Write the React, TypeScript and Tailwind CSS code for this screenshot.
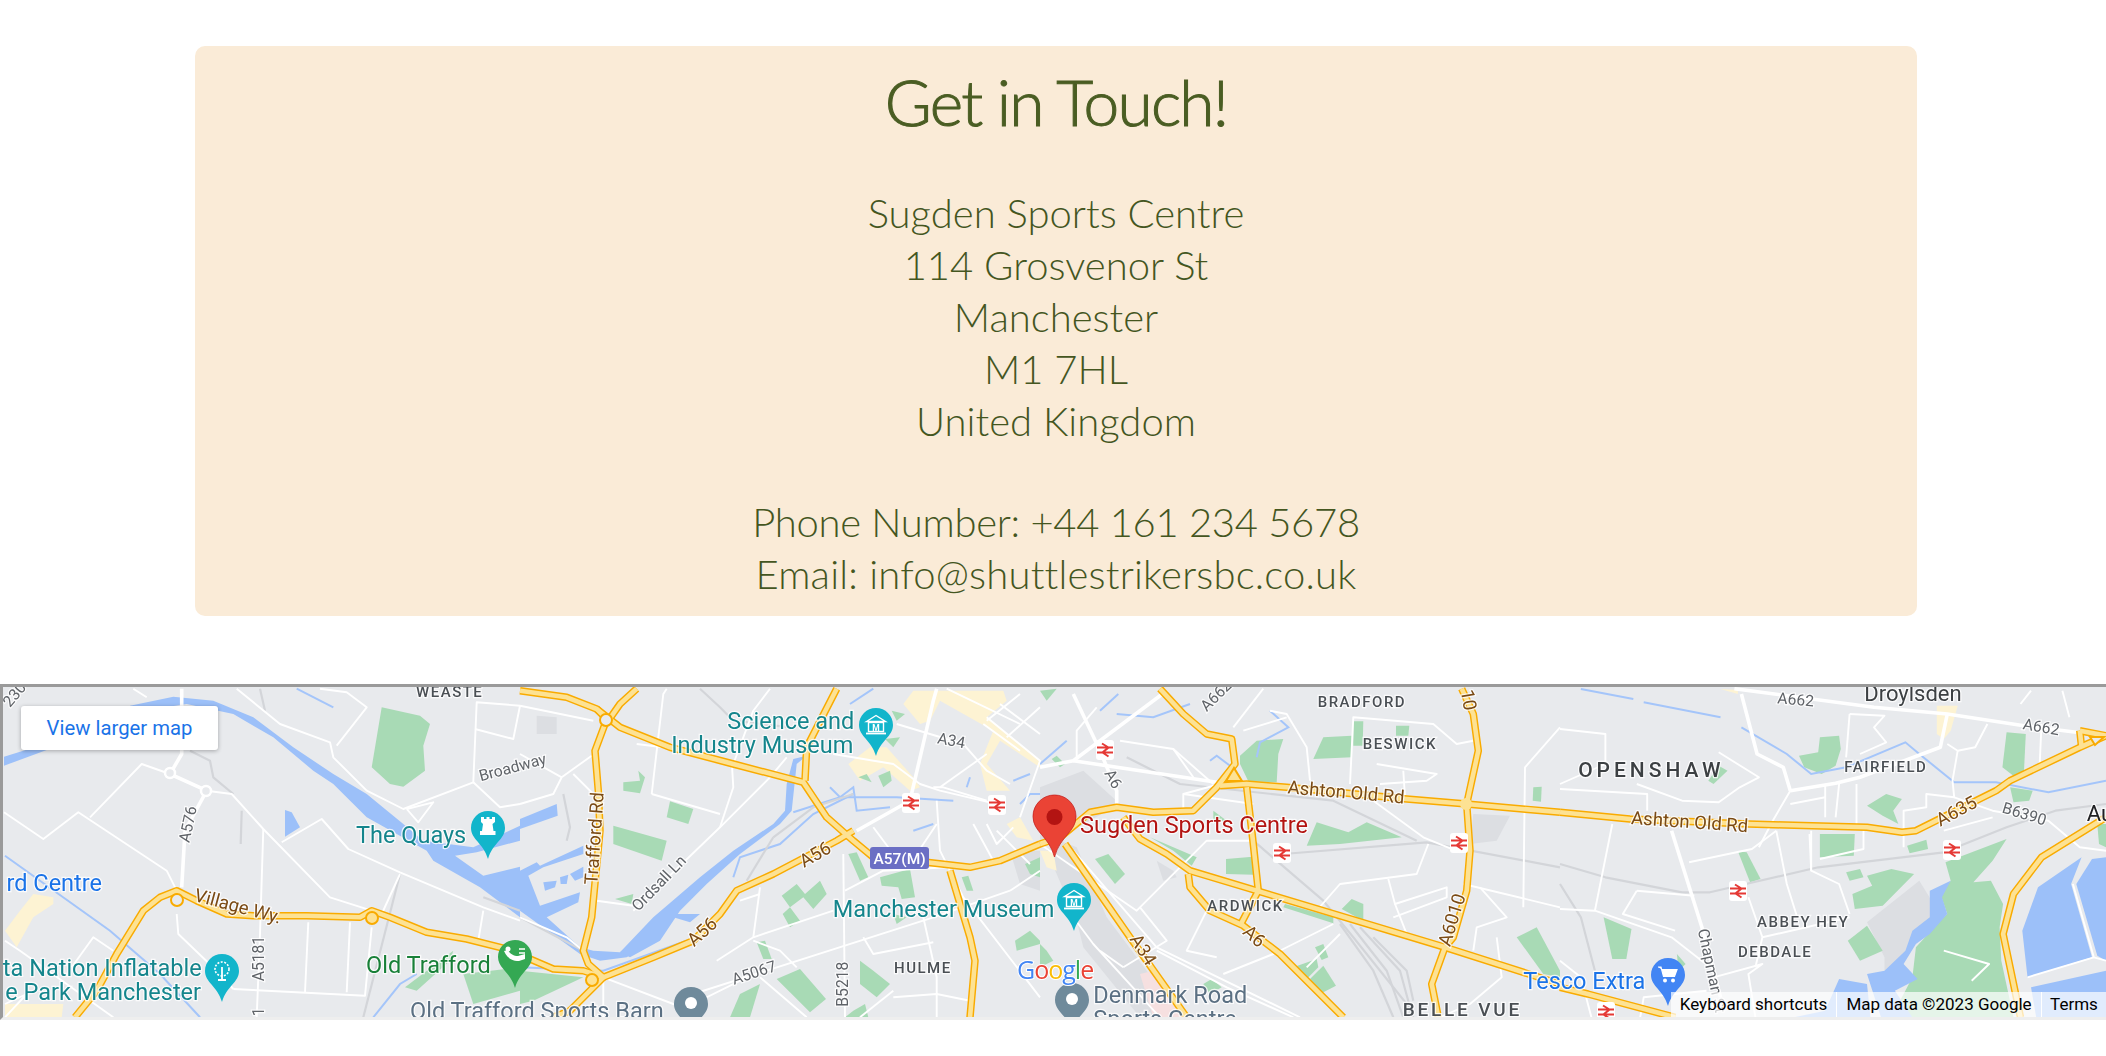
import type { ReactNode } from "react";

// coords are read off 4 crops of the map (3x), one list per slice
type Shape = [number, number[]];

const OFFSET = [0, 520, 1040, 1560];
const SCALE = [1 / 3, 1 / 3, 1 / 3, 546 / 1565];
const A = 0;
const B = 1;
const C = 2;
const D = 3;

const toX = (p: number, x: number) => OFFSET[p] + x * SCALE[p];
const toY = (y: number) => 684 + y / 3;

function line(p: number, pts: number[]) {
  let d = "";
  for (let i = 0; i < pts.length; i += 2) {
    d += (i === 0 ? "M" : "L") + toX(p, pts[i]).toFixed(1) + " " + toY(pts[i + 1]).toFixed(1);
  }
  return d;
}

const greys: Shape[] = [
  [B, [50, 95, 110, 100, 110, 150, 50, 150]],
  [B, [1470, 500, 1560, 500, 1560, 620, 1500, 600]],
  [C, [0, 310, 130, 260, 240, 360, 40, 470, 0, 480]],
  [C, [20, 500, 60, 470, 110, 490, 200, 700, 350, 900, 430, 1000, 300, 1000, 130, 790, 110, 710]],
  [C, [1300, 390, 1410, 395, 1370, 470, 1290, 480]],
  [C, [350, 530, 400, 560, 410, 580, 370, 590]],
  [D, [880, 715, 1030, 590, 1065, 650, 1100, 690, 1070, 740, 1010, 770, 980, 840, 930, 860, 930, 820]],
];

const urban: Shape[] = [
  [A, [100, 630, 160, 640, 160, 660, 100, 700, 50, 790, 15, 740, 60, 680]],
  [A, [15, 960, 190, 960, 185, 1000, 15, 1000]],
  [B, [985, 240, 1050, 190, 1100, 190, 1180, 280, 1200, 310, 1170, 320, 1090, 250, 1020, 290]],
  [B, [1150, 60, 1180, 20, 1450, 20, 1460, 50, 1400, 100, 1560, 230, 1560, 250, 1440, 170, 1400, 240, 1470, 320, 1400, 320, 1380, 240, 1420, 140, 1260, 50, 1230, 110, 1200, 120]],
  [B, [1460, 420, 1500, 400, 1540, 470, 1490, 460]],
  [C, [0, 500, 40, 500, 50, 560, 20, 550]],
  [D, [1080, 65, 1140, 65, 1120, 140, 1100, 165, 1080, 150]],
  [D, [460, 15, 510, 18, 510, 30]],
];

const parks: Shape[] = [
  [A, [1145, 70, 1260, 95, 1290, 120, 1270, 185, 1275, 260, 1210, 308, 1170, 300, 1115, 250]],
  [A, [1390, 870, 1560, 850, 1560, 920, 1420, 960]],
  [A, [1215, 910, 1360, 800, 1350, 830, 1250, 920]],
  [B, [310, 295, 360, 290, 355, 260, 375, 280, 360, 328, 310, 320]],
  [B, [450, 352, 520, 375, 505, 420, 440, 400]],
  [B, [280, 425, 440, 470, 425, 530, 280, 480]],
  [B, [285, 645, 340, 630, 335, 660]],
  [B, [0, 860, 190, 880, 40, 950, 0, 960]],
  [B, [985, 510, 1010, 505, 1045, 580, 1020, 590]],
  [B, [1080, 580, 1170, 555, 1185, 640, 1145, 645, 1135, 610, 1085, 605]],
  [B, [785, 635, 830, 600, 855, 630, 900, 590, 920, 630, 880, 675, 850, 640, 810, 670, 840, 710, 810, 730, 788, 690, 810, 670]],
  [B, [710, 775, 735, 770, 755, 825, 730, 825]],
  [B, [770, 885, 840, 855, 918, 945, 870, 985]],
  [B, [1020, 830, 1060, 860, 1110, 900, 1070, 940, 1020, 900]],
  [B, [630, 1000, 660, 930, 720, 900, 690, 1000]],
  [B, [1000, 980, 1035, 960, 1045, 1000, 975, 1000]],
  [B, [1325, 580, 1345, 575, 1360, 620, 1340, 620]],
  [B, [1485, 770, 1530, 740, 1560, 770, 1560, 780, 1490, 800]],
  [B, [1120, 690, 1160, 700, 1130, 720]],
  [B, [1115, 80, 1155, 90, 1130, 110]],
  [B, [1095, 165, 1140, 160, 1120, 190]],
  [B, [1015, 280, 1040, 270, 1055, 295]],
  [B, [1075, 275, 1110, 260, 1115, 290, 1090, 310]],
  [B, [1515, 540, 1560, 520, 1560, 580, 1530, 570]],
  [C, [600, 215, 650, 170, 730, 165, 715, 210, 710, 295, 625, 292, 600, 240]],
  [C, [850, 160, 935, 155, 935, 220, 820, 225]],
  [C, [940, 112, 970, 112, 968, 185, 940, 185]],
  [C, [1068, 125, 1108, 125, 1105, 155, 1068, 155]],
  [C, [1480, 310, 1505, 308, 1503, 353, 1478, 350]],
  [C, [830, 415, 925, 445, 980, 415, 1085, 460, 900, 480, 800, 485]],
  [C, [558, 525, 638, 518, 640, 572, 558, 570]],
  [C, [165, 525, 205, 510, 255, 570, 225, 600]],
  [C, [330, 460, 400, 490, 470, 520, 455, 545, 400, 500]],
  [C, [520, 380, 560, 410, 520, 410]],
  [C, [735, 660, 880, 700, 880, 718, 730, 670]],
  [C, [905, 675, 935, 645, 970, 660, 970, 710]],
  [C, [825, 790, 850, 780, 865, 820, 845, 828]],
  [C, [760, 850, 830, 825, 835, 850, 800, 885]],
  [C, [810, 885, 850, 845, 888, 905, 840, 930]],
  [C, [1430, 760, 1490, 730, 1560, 860, 1560, 880, 1510, 870]],
  [C, [490, 900, 515, 885, 545, 910, 510, 930]],
  [C, [0, 20, 50, 14, 20, 50]],
  [C, [35, 225, 50, 215, 75, 240, 60, 250]],
  [C, [0, 780, 20, 800, 40, 830, 0, 850]],
  [D, [685, 215, 740, 205, 745, 160, 800, 155, 805, 195, 790, 245, 750, 270, 700, 250]],
  [D, [425, 290, 455, 245, 480, 260, 440, 300]],
  [D, [1280, 145, 1335, 150, 1330, 260, 1305, 280, 1268, 250]],
  [D, [1290, 310, 1355, 320, 1345, 350, 1300, 355]],
  [D, [880, 365, 935, 330, 980, 345, 955, 380, 970, 420, 925, 395]],
  [D, [745, 450, 845, 450, 842, 515, 745, 520]],
  [D, [995, 485, 1050, 467, 1055, 495, 1002, 508]],
  [D, [510, 502, 535, 505, 575, 585, 545, 595]],
  [D, [820, 565, 860, 555, 870, 580, 830, 590]],
  [D, [880, 575, 950, 555, 1015, 570, 925, 665, 845, 675, 838, 630, 895, 605]],
  [D, [1105, 535, 1280, 465, 1240, 530, 1185, 595, 1235, 590, 1270, 660, 1260, 730, 1265, 830, 1300, 1000, 950, 1000, 1010, 880, 1020, 790, 1090, 710, 1110, 690, 1090, 630, 1120, 590]],
  [D, [825, 770, 880, 725, 925, 800, 860, 830]],
  [D, [125, 700, 205, 735, 190, 825, 150, 825]],
  [D, [1540, 420, 1565, 420, 1565, 490, 1545, 480]],
  [D, [335, 810, 360, 840, 340, 860]],
];

const water: Shape[] = [
  [A, [12, 218, 135, 180, 140, 198, 12, 245]],
  [A, [390, 65, 520, 38, 640, 50, 760, 100, 880, 190, 1000, 270, 1100, 330, 1210, 420, 1270, 470, 1420, 490, 1560, 425, 1560, 470, 1430, 505, 1365, 515, 1450, 575, 1560, 548, 1560, 700, 1440, 610, 1300, 530, 1280, 500, 1100, 400, 1000, 300, 940, 260, 820, 160, 700, 90, 560, 60, 400, 85]],
  [A, [855, 378, 875, 385, 900, 430, 855, 458]],
  [B, [0, 405, 110, 360, 113, 395, 0, 435]],
  [B, [0, 560, 50, 535, 60, 545, 190, 485, 190, 510, 70, 550, 25, 575, 60, 665, 180, 625, 175, 655, 80, 700, 180, 790, 220, 800, 300, 805, 400, 720, 460, 690, 540, 690, 510, 715, 460, 700, 420, 760, 320, 820, 240, 830, 180, 810, 0, 680]],
  [B, [300, 805, 400, 700, 470, 640, 540, 580, 640, 500, 760, 420, 795, 380, 800, 300, 820, 225, 860, 215, 830, 240, 815, 380, 780, 420, 660, 510, 560, 600, 480, 680, 420, 770, 330, 820]],
  [B, [70, 595, 110, 590, 105, 610, 75, 620]],
  [B, [120, 580, 145, 572, 140, 600, 122, 600]],
  [B, [150, 570, 190, 548, 190, 580, 165, 590]],
  [D, [1060, 620, 1120, 590, 1095, 640, 1110, 690, 1060, 750, 1020, 780, 985, 840, 1025, 885, 960, 920, 1010, 1000, 920, 1000, 880, 870, 930, 860, 990, 800, 1010, 740, 1060, 700]],
  [D, [1495, 520, 1465, 600, 1525, 820, 1340, 880, 1325, 740, 1370, 610]],
  [D, [1565, 520, 1525, 525, 1480, 600, 1540, 815, 1565, 830]],
  [D, [1565, 860, 1350, 910, 1365, 1000, 1565, 1000]],
  [D, [800, 885, 880, 900, 890, 1000, 670, 1000, 760, 980]],
];

const thinWater: Shape[] = [
  [A, [15, 515, 330, 740, 480, 870, 600, 1000]],
  [A, [890, 14, 1000, 70]],
  [A, [1120, 1000, 1200, 900, 1250, 870]],
  [B, [640, 580, 660, 520, 780, 480, 880, 390, 1000, 330]],
  [B, [820, 385, 960, 340, 1130, 340, 1300, 350]],
  [B, [930, 310, 960, 340, 1000, 310, 1010, 380, 1110, 370]],
  [B, [1180, 440, 1240, 420]],
  [B, [1340, 310, 1350, 280]],
  [B, [1480, 290, 1530, 270]],
  [B, [1500, 360, 1530, 330, 1560, 330]],
  [B, [0, 850, 250, 860, 500, 770]],
  [B, [990, 60, 1060, 14]],
  [C, [0, 240, 80, 170]],
  [C, [180, 80, 235, 30]],
  [C, [230, 90, 340, 100, 450, 60]],
  [C, [650, 220, 660, 175, 745, 130, 690, 80]],
  [C, [510, 230, 530, 215, 570, 245]],
  [D, [60, 15, 210, 45]],
  [D, [240, 55, 460, 100]],
  [D, [520, 130, 650, 210, 720, 270, 820, 250, 990, 175, 1030, 210, 1130, 295, 1250, 295, 1400, 325, 1565, 290]],
];

const rails: Shape[] = [
  [A, [780, 14, 795, 80]],
  [A, [570, 200, 630, 230, 640, 280, 700, 330]],
  [A, [725, 380, 722, 480]],
  [A, [1090, 1000, 1200, 570]],
  [A, [1450, 640, 1560, 680]],
  [B, [540, 14, 600, 70, 640, 110, 810, 130]],
  [B, [130, 330, 150, 430, 140, 470]],
  [B, [760, 460, 680, 590]],
  [B, [0, 700, 190, 800]],
  [B, [1000, 330, 880, 370, 760, 460]],
  [C, [260, 220, 420, 300, 880, 350, 1130, 470]],
  [C, [640, 470, 850, 650, 940, 760, 1100, 960, 1120, 1000]],
  [C, [730, 510, 1160, 475, 1560, 550]],
  [C, [900, 720, 1000, 860, 1060, 1000]],
  [C, [930, 720, 1040, 860, 1090, 1000]],
  [C, [960, 730, 1080, 860, 1110, 970]],
  [C, [1000, 760, 1100, 860, 1120, 950]],
  [D, [0, 540, 130, 580, 350, 625, 430, 625, 740, 550, 1100, 505, 1280, 430, 1420, 380, 1565, 360]],
  [D, [0, 600, 60, 700, 100, 860]],
];

const bigRoads: Shape[] = [
  [A, [545, 14, 545, 210, 510, 270, 620, 320, 555, 440, 545, 610]],
  [B, [1010, 440, 1170, 350, 1240, 50, 1250, 14]],
  [C, [0, 250, 100, 230, 380, 20]],
  [C, [100, 230, 530, 295]],
  [C, [100, 30, 180, 200, 230, 320, 230, 360]],
  [D, [500, 14, 900, 70, 1110, 90, 1330, 125, 1480, 145]],
  [D, [520, 30, 565, 210, 640, 250, 660, 320]],
  [D, [660, 320, 790, 298, 860, 280, 1090, 190, 1110, 90]],
  [D, [320, 440, 410, 740, 460, 940]],
];

const roads: Shape[] = [
  [A, [12, 385, 130, 465, 235, 385, 500, 560, 530, 620]],
  [A, [270, 400, 425, 240, 510, 270]],
  [A, [620, 320, 695, 330, 790, 435, 990, 640, 1115, 680]],
  [A, [710, 14, 840, 120, 990, 175, 1000, 220, 1100, 320, 1210, 375, 1420, 295, 1430, 55, 1560, 65]],
  [A, [1010, 185, 1100, 70, 1040, 25, 960, 14]],
  [A, [1220, 375, 1300, 355, 1255, 415, 1220, 375]],
  [A, [845, 475, 965, 405, 1045, 495, 1200, 565, 1450, 670, 1560, 710]],
  [A, [790, 435, 780, 750, 770, 1000]],
  [A, [925, 715, 915, 925]],
  [A, [1050, 715, 1040, 925]],
  [A, [700, 915, 1095, 935, 1115, 730]],
  [A, [530, 690, 535, 750, 660, 870, 700, 915]],
  [A, [1425, 135, 1540, 165, 1560, 65]],
  [A, [1420, 295, 1500, 370, 1560, 360]],
  [A, [1200, 570, 1145, 690]],
  [A, [1450, 680, 1435, 770]],
  [A, [15, 770, 60, 800, 340, 1000]],
  [A, [215, 850, 280, 760, 340, 800]],
  [A, [15, 960, 80, 930, 15, 1000]],
  [A, [400, 14, 440, 40]],
  [B, [0, 65, 220, 110]],
  [B, [215, 215, 125, 280, 100, 330, 0, 360]],
  [B, [125, 280, 0, 210]],
  [B, [160, 270, 240, 350]],
  [B, [395, 330, 430, 30, 440, 14]],
  [B, [350, 180, 430, 190]],
  [B, [230, 650, 340, 665]],
  [B, [395, 330, 600, 390]],
  [B, [340, 680, 600, 430, 640, 310, 635, 230]],
  [B, [600, 430, 750, 280, 800, 220]],
  [B, [750, 14, 700, 80, 640, 240]],
  [B, [590, 830, 700, 760, 720, 610]],
  [B, [660, 650, 720, 630]],
  [B, [0, 700, 140, 760, 190, 800]],
  [B, [250, 880, 460, 960, 520, 980]],
  [B, [250, 880, 250, 1000]],
  [B, [520, 930, 1240, 700, 1470, 620]],
  [B, [970, 510, 975, 1000]],
  [B, [720, 880, 860, 1000]],
  [B, [700, 770, 780, 800, 830, 850]],
  [B, [520, 960, 680, 880]],
  [B, [975, 620, 1090, 560, 1280, 550]],
  [B, [700, 760, 940, 680]],
  [B, [1060, 430, 1120, 510]],
  [B, [1190, 510, 1250, 420]],
  [B, [1210, 700, 1250, 880, 1250, 1000]],
  [B, [1030, 760, 1060, 810, 1240, 775]],
  [B, [1240, 310, 1270, 310, 1400, 350]],
  [B, [1250, 350, 1260, 500, 1330, 640, 1560, 940]],
  [B, [1130, 120, 1330, 180, 1400, 260, 1470, 300]],
  [B, [1260, 310, 1400, 210]],
  [B, [1400, 420, 1430, 480, 1480, 430]],
  [B, [1360, 420, 1420, 530]],
  [B, [1470, 620, 1560, 560]],
  [B, [940, 210, 1120, 240, 1200, 300, 1260, 320, 1450, 365]],
  [B, [1400, 100, 1560, 230, 1500, 400]],
  [B, [1280, 14, 1500, 120]],
  [B, [1440, 60, 1560, 150]],
  [B, [1500, 30, 1400, 110]],
  [B, [1560, 70, 1460, 160]],
  [B, [1120, 940, 1250, 930, 1350, 950]],
  [B, [1020, 1000, 1120, 920]],
  [B, [1390, 120, 1500, 200]],
  [B, [1430, 440, 1530, 540]],
  [C, [110, 220, 110, 140, 170, 70]],
  [C, [540, 300, 430, 330, 430, 385]],
  [C, [580, 130, 670, 14]],
  [C, [240, 170, 400, 195, 520, 300]],
  [C, [400, 195, 460, 280]],
  [C, [640, 360, 430, 330]],
  [C, [810, 290, 800, 190, 740, 90, 690, 80]],
  [C, [740, 100, 610, 140]],
  [C, [930, 300, 940, 100, 1180, 120, 1250, 180, 1300, 170]],
  [C, [1010, 240, 1190, 270, 1160, 290, 1020, 300]],
  [C, [1095, 340, 1090, 260]],
  [C, [1000, 350, 1150, 460, 1260, 505]],
  [C, [1165, 480, 1130, 570, 900, 600, 830, 680]],
  [C, [1045, 585, 1065, 660, 1220, 610, 1220, 640, 1060, 700]],
  [C, [1065, 660, 1100, 750]],
  [C, [1270, 600, 1560, 670]],
  [C, [1320, 610, 1400, 700, 1310, 730, 1300, 800]],
  [C, [1450, 670, 1455, 250, 1560, 130]],
  [C, [650, 470, 500, 470, 290, 680, 130, 570]],
  [C, [500, 680, 440, 800, 530, 820]],
  [C, [130, 570, 0, 480]],
  [C, [100, 500, 350, 790, 780, 1000]],
  [C, [350, 800, 560, 910, 760, 1000]],
  [C, [300, 670, 380, 770, 250, 850]],
  [C, [880, 720, 700, 810, 550, 870]],
  [C, [900, 750, 800, 850]],
  [C, [250, 850, 180, 800]],
  [C, [100, 700, 160, 780, 360, 1000]],
  [C, [1370, 760, 1385, 880, 1290, 960, 1200, 1000]],
  [D, [0, 135, 130, 150, 130, 240, 0, 300]],
  [D, [0, 315, 250, 330, 250, 380]],
  [D, [455, 205, 570, 280, 515, 310, 455, 355, 350, 350, 220, 300]],
  [D, [150, 420, 100, 680]],
  [D, [0, 675, 100, 680, 320, 760, 430, 850]],
  [D, [220, 620, 180, 690, 330, 740]],
  [D, [220, 620, 385, 635]],
  [D, [370, 535, 550, 495, 620, 440]],
  [D, [660, 320, 610, 410, 570, 490]],
  [D, [620, 440, 650, 600, 680, 700]],
  [D, [720, 440, 720, 560, 800, 600, 830, 690]],
  [D, [540, 640, 580, 760, 560, 850]],
  [D, [580, 760, 830, 700]],
  [D, [870, 430, 870, 495, 745, 525]],
  [D, [760, 300, 760, 400]],
  [D, [800, 300, 790, 400]],
  [D, [850, 300, 850, 420]],
  [D, [660, 360, 760, 340]],
  [D, [830, 90, 820, 220]],
  [D, [830, 90, 930, 95, 900, 130, 935, 175, 860, 210]],
  [D, [1110, 180, 1140, 200, 1125, 290, 1130, 340, 1050, 330, 1050, 370, 985, 380, 985, 490]],
  [D, [1140, 200, 1190, 190, 1225, 120]],
  [D, [1380, 120, 1375, 240]],
  [D, [1130, 340, 1240, 380, 1400, 410, 1490, 490, 1565, 500]],
  [D, [1100, 440, 1240, 400]],
  [D, [1320, 60, 1350, 20]],
  [D, [1440, 20, 1460, 100]],
  [D, [715, 450, 720, 560]],
  [D, [1470, 600, 1530, 820, 1565, 830]],
  [D, [1340, 880, 1530, 820]],
  [D, [1100, 800, 1230, 840, 1180, 890]],
  [D, [440, 880, 580, 840, 540, 870, 560, 1000]],
  [D, [230, 1000, 240, 940, 420, 920]],
  [D, [0, 830, 60, 880, 90, 1000]],
];

const highways: Shape[] = [
  [A, [225, 1000, 290, 920, 350, 810, 430, 680, 480, 640, 530, 620, 590, 650, 680, 690, 760, 695, 920, 695, 1080, 700, 1115, 680, 1170, 700, 1280, 745, 1400, 765, 1560, 805]],
  [B, [0, 805, 30, 825, 100, 855, 190, 860, 250, 880, 400, 820, 520, 770, 600, 690, 650, 620, 760, 570, 950, 470, 1000, 440]],
  [B, [255, 120, 225, 200, 235, 320, 240, 440, 215, 700, 190, 800, 205, 840, 250, 880, 150, 980, 100, 1000]],
  [B, [0, 20, 140, 40, 230, 75, 300, 130, 450, 190, 640, 240, 850, 295, 880, 340, 920, 400, 1000, 470, 1060, 520, 1220, 535, 1350, 550, 1440, 530, 1560, 480]],
  [B, [230, 75, 265, 110, 300, 60, 350, 14]],
  [B, [855, 290, 860, 190, 950, 14]],
  [B, [1290, 560, 1350, 760, 1365, 830, 1350, 1000]],
  [C, [0, 480, 60, 460, 150, 385, 230, 370, 340, 385, 460, 380, 530, 310, 585, 240, 575, 165, 500, 150, 430, 90, 360, 14]],
  [C, [540, 305, 620, 300, 740, 310, 1100, 345, 1280, 360, 1560, 385]],
  [C, [1265, 14, 1300, 90, 1315, 200, 1280, 360, 1290, 500, 1280, 620, 1240, 760, 1215, 790, 1175, 900, 1195, 1000]],
  [C, [75, 480, 270, 760, 440, 1000]],
  [C, [250, 400, 300, 465, 380, 510, 450, 560, 1215, 790, 1560, 900]],
  [C, [445, 570, 450, 610, 510, 680, 610, 725, 720, 810, 910, 1000]],
  [C, [620, 310, 640, 480, 655, 620, 600, 725]],
  [D, [0, 385, 200, 405, 540, 420, 880, 430, 980, 445, 1020, 440, 1250, 320, 1290, 290, 1490, 190, 1565, 155]],
  [D, [0, 910, 80, 930, 330, 1000]],
  [D, [1565, 400, 1380, 520, 1300, 630, 1270, 750, 1320, 1000]],
  [D, [1490, 140, 1565, 155]],
  [D, [1490, 140, 1495, 190]],
];

type Label = { p: number; x: number; y: number; t: string; c: string; s: number; r?: number; end?: boolean; sp?: number; w?: number };

const TEAL = "#14858c";
const BROWN = "#7a4a14";
const GREY = "#5f6368";
const SUB = "#4a4f54";
const SLATE = "#5b7083";
const BLUE = "#1a73e8";

const labels: Label[] = [
  { p: A, x: 30, y: 72, t: "230", c: GREY, s: 15.7, r: -50 },
  { p: A, x: 1248, y: 40, t: "WEASTE", c: SUB, s: 15, sp: 1.5, w: 500 },
  { p: A, x: 1442, y: 292, t: "Broadway", c: GREY, s: 15.7, r: -15 },
  { p: A, x: 568, y: 478, t: "A576", c: GREY, s: 15.7, r: -78 },
  { p: A, x: 1068, y: 478, t: "The Quays", c: TEAL, s: 23.5 },
  { p: A, x: 306, y: 622, t: "rd Centre", c: BLUE, s: 23.5, end: true },
  { p: A, x: 580, y: 650, t: "Village Wy.", c: BROWN, s: 18.5, r: 15 },
  { p: A, x: 792, y: 892, t: "A5181", c: GREY, s: 15.7, r: -90 },
  { p: A, x: 792, y: 997, t: "1", c: GREY, s: 15.7, r: -90 },
  { p: A, x: 605, y: 876, t: "ta Nation Inflatable", c: TEAL, s: 23.5, end: true },
  { p: A, x: 603, y: 947, t: "e Park Manchester", c: TEAL, s: 23.5, end: true },
  { p: A, x: 1098, y: 868, t: "Old Trafford", c: "#188038", s: 23.5 },
  { p: A, x: 1230, y: 1004, t: "Old Trafford Sports Barn", c: SLATE, s: 23.5 },
  { p: B, x: 232, y: 603, t: "Trafford Rd", c: BROWN, s: 18.5, r: -86 },
  { p: B, x: 355, y: 684, t: "Ordsall Ln", c: GREY, s: 15.7, r: -46 },
  { p: B, x: 852, y: 552, t: "A56", c: BROWN, s: 18.5, r: -30 },
  { p: B, x: 522, y: 790, t: "A56", c: BROWN, s: 18.5, r: -42 },
  { p: B, x: 622, y: 135, t: "Science and", c: TEAL, s: 23.5 },
  { p: B, x: 1000, y: 207, t: "Industry Museum", c: TEAL, s: 23.5, end: true },
  { p: B, x: 1250, y: 178, t: "A34", c: GREY, s: 15.7, r: 10 },
  { p: B, x: 938, y: 698, t: "Manchester Museum", c: TEAL, s: 23.5 },
  { p: B, x: 642, y: 902, t: "A5067", c: GREY, s: 15.7, r: -18 },
  { p: B, x: 985, y: 968, t: "B5218", c: GREY, s: 15.7, r: -90 },
  { p: B, x: 1122, y: 868, t: "HULME", c: SUB, s: 15, sp: 1.5, w: 500 },
  { p: C, x: 500, y: 85, t: "A662", c: GREY, s: 15.7, r: -45 },
  { p: C, x: 833, y: 68, t: "BRADFORD", c: SUB, s: 15, sp: 1.5, w: 500 },
  { p: C, x: 968, y: 195, t: "BESWICK", c: SUB, s: 15, sp: 1.5, w: 500 },
  { p: C, x: 742, y: 328, t: "Ashton Old Rd", c: BROWN, s: 18.5, r: 5 },
  { p: C, x: 192, y: 268, t: "A6", c: GREY, s: 15.7, r: 60 },
  { p: C, x: 120, y: 448, t: "Sugden Sports Centre", c: "#b31412", s: 23.5 },
  { p: C, x: 268, y: 765, t: "A34", c: BROWN, s: 18.5, r: 58 },
  { p: C, x: 502, y: 680, t: "ARDWICK", c: SUB, s: 15, sp: 1.5, w: 500 },
  { p: C, x: 605, y: 748, t: "A6", c: BROWN, s: 18.5, r: 42 },
  { p: C, x: 160, y: 958, t: "Denmark Road", c: SLATE, s: 23.5 },
  { p: C, x: 160, y: 1030, t: "Sports Centre", c: SLATE, s: 23.5 },
  { p: C, x: 1230, y: 790, t: "A6010", c: BROWN, s: 18.5, r: -73 },
  { p: C, x: 1262, y: 20, t: "10", c: BROWN, s: 18.5, r: 80 },
  { p: C, x: 1088, y: 995, t: "BELLE VUE", c: SUB, s: 19, sp: 2.8, w: 500 },
  { p: C, x: 1450, y: 915, t: "Tesco Extra", c: BLUE, s: 23.5 },
  { p: D, x: 622, y: 58, t: "A662", c: GREY, s: 15.7, r: 5 },
  { p: D, x: 872, y: 52, t: "Droylsden", c: "#3c4043", s: 22 },
  { p: D, x: 1325, y: 135, t: "A662", c: GREY, s: 15.7, r: 10 },
  { p: D, x: 52, y: 280, t: "OPENSHAW", c: "#3c4043", s: 21, sp: 4, w: 500 },
  { p: D, x: 815, y: 263, t: "FAIRFIELD", c: SUB, s: 15, sp: 1.5, w: 500 },
  { p: D, x: 203, y: 420, t: "Ashton Old Rd", c: BROWN, s: 18.5, r: 4 },
  { p: D, x: 1090, y: 428, t: "A635", c: BROWN, s: 18.5, r: -28 },
  { p: D, x: 1265, y: 385, t: "B6390", c: GREY, s: 15.7, r: 17 },
  { p: D, x: 1510, y: 410, t: "Au", c: "#202124", s: 22 },
  { p: D, x: 565, y: 730, t: "ABBEY HEY", c: SUB, s: 15, sp: 1.5, w: 500 },
  { p: D, x: 510, y: 818, t: "DEBDALE", c: SUB, s: 15, sp: 1.5, w: 500 },
  { p: D, x: 395, y: 738, t: "Chapman St", c: GREY, s: 15.7, r: 78 },
];

const PIN = "M17 0C7.6 0 0 7.4 0 17c0 11.5 12.5 15 17 31 4.5-16 17-19.5 17-31C34 7.4 26.4 0 17 0z";

function Pin({ x, y, color, children }: { x: number; y: number; color: string; children?: ReactNode }) {
  return (
    <g transform={`translate(${x - 17} ${y - 48})`}>
      <path d={PIN} fill={color} />
      {children}
    </g>
  );
}

const Museum = () => (
  <g fill="none" stroke="#fff" strokeWidth="1.4">
    <path d="M7.5 13.5L17 7.5l9.5 6z" />
    <rect x="9.5" y="14.5" width="15" height="9" />
    <path d="M7 25.5h20" strokeWidth="1.8" />
    <text x="17" y="22.8" textAnchor="middle" fontSize="8.5" fill="#fff" stroke="none" fontWeight="700">M</text>
  </g>
);

function Rail({ x, y }: { x: number; y: number }) {
  return (
    <g transform={`translate(${x - 9} ${y - 10})`}>
      <rect width="18" height="20" rx="3" fill="#fff" />
      <path d="M1 7.5h16M1 12.5h16M6 3.5l6.5 4-6 5 6 4" fill="none" stroke="#e53935" strokeWidth="2" />
    </g>
  );
}

function MapDrawing() {
  return (
    <svg viewBox="3 687 2103 330" className="block h-[330px] w-[2103px] blur-[0.4px] font-['Roboto',sans-serif]">
      <rect x="0" y="680" width="2106" height="340" fill="#e8eaed" />
      {greys.map(([p, pts], i) => <path key={i} d={line(p, pts) + "Z"} fill="#dcdee2" />)}
      <path d={line(C, [300, 870, 340, 860, 380, 920, 440, 1000, 340, 1000]) + "Z"} fill="#f6e0e0" />
      {urban.map(([p, pts], i) => <path key={i} d={line(p, pts) + "Z"} fill="#fdf3d3" />)}
      {parks.map(([p, pts], i) => <path key={i} d={line(p, pts) + "Z"} fill="#a8dab5" />)}
      {thinWater.map(([p, pts], i) => <path key={i} d={line(p, pts)} fill="none" stroke="#a4c5fa" strokeWidth="2" />)}
      {water.map(([p, pts], i) => <path key={i} d={line(p, pts) + "Z"} fill="#9cc0f9" />)}
      {rails.map(([p, pts], i) => <path key={i} d={line(p, pts)} fill="none" stroke="#d3d5d9" strokeWidth="2.2" strokeLinejoin="round" />)}
      {roads.map(([p, pts], i) => <path key={i} d={line(p, pts)} fill="none" stroke="#fff" strokeWidth="1.9" strokeLinejoin="round" />)}
      {bigRoads.map(([p, pts], i) => <path key={i} d={line(p, pts)} fill="none" stroke="#fff" strokeWidth="3.6" strokeLinejoin="round" />)}
      {highways.map(([p, pts], i) => <path key={i} d={line(p, pts)} fill="none" stroke="#f9ab00" strokeWidth="7.5" strokeLinejoin="round" />)}
      {highways.map(([p, pts], i) => <path key={i} d={line(p, pts)} fill="none" stroke="#fde293" strokeWidth="4.6" strokeLinejoin="round" />)}

      {/* junctions and roundabouts */}
      <circle cx="177" cy="900" r="6" fill="#e8eaed" stroke="#f9ab00" strokeWidth="2" />
      <circle cx="372" cy="918" r="6" fill="#fde293" stroke="#f9ab00" strokeWidth="2" />
      <circle cx="606" cy="720" r="6" fill="#e8eaed" stroke="#f9ab00" strokeWidth="2" />
      <circle cx="592" cy="980" r="6" fill="#fde293" stroke="#f9ab00" strokeWidth="2" />
      <path d="M1226 781l8-13 8 13z" fill="#fde293" stroke="#f9ab00" strokeWidth="2" />
      <path d="M2090 737h14l-9 8z" fill="#e8eaed" stroke="#f9ab00" strokeWidth="2" />
      <circle cx="1466" cy="804" r="6" fill="#fde293" />
      <circle cx="170" cy="773" r="5" fill="#e8eaed" stroke="#fff" strokeWidth="2.5" />
      <circle cx="206" cy="791" r="5" fill="#e8eaed" stroke="#fff" strokeWidth="2.5" />

      {/* A57(M) shield */}
      <rect x="870" y="847" width="59" height="22" rx="3" fill="#6b6fc4" />
      <text x="899.5" y="864" textAnchor="middle" fontSize="15.5" fontWeight="500" fill="#fff">A57(M)</text>

      <Rail x={911} y={803} />
      <Rail x={997} y={805} />
      <Rail x={1105} y={750} />
      <Rail x={1282} y={853} />
      <Rail x={1459} y={843} />
      <Rail x={1952} y={850} />
      <Rail x={1738} y={891} />
      <Rail x={1606} y={1012} />

      {labels.map((l, i) => {
        const x = toX(l.p, l.x);
        const y = toY(l.y);
        return (
          <text
            key={i}
            x={x}
            y={y}
            fontSize={l.s}
            fill={l.c}
            fontWeight={l.w ?? 400}
            letterSpacing={l.sp ?? 0}
            textAnchor={l.end ? "end" : "start"}
            transform={l.r ? `rotate(${l.r} ${x} ${y})` : undefined}
            stroke="#fff"
            strokeWidth="2.5"
            strokeOpacity="0.8"
            paintOrder="stroke"
          >
            {l.t}
          </text>
        );
      })}

      <Pin x={488} y={859} color="#12b5cb">
        <path d="M10 6h3v2h2.5V6h3v2H21V6h3v5l-2.5 2 1 7h2v4H9v-4h2l1-7-2-2z" fill="#fff" />
      </Pin>
      <Pin x={222} y={1002} color="#12b5cb">
        <circle cx="17" cy="15" r="7" fill="none" stroke="#fff" strokeWidth="1.6" strokeDasharray="2 1.5" />
        <path d="M17 13v12M13 26h8" stroke="#fff" strokeWidth="1.8" />
      </Pin>
      <Pin x={515} y={988} color="#34a853">
        <path d="M6 11c3 7 8 10 15 10l6-2v-5l-7 2c-4 0-8-2-10-6z" fill="#fff" />
        <circle cx="10" cy="9" r="2.5" fill="#fff" />
        <path d="M21 9h6M21 13h6" stroke="#fff" strokeWidth="1.6" />
      </Pin>
      <Pin x={876} y={756} color="#12b5cb"><Museum /></Pin>
      <Pin x={1074} y={931} color="#12b5cb"><Museum /></Pin>
      <Pin x={1668} y={1006} color="#4285f4">
        <path d="M7 9h3l2.5 9.5h11L26 11.5H11" fill="#fff" stroke="#fff" strokeWidth="1.2" />
        <circle cx="14" cy="22.5" r="2" fill="#fff" />
        <circle cx="22" cy="22.5" r="2" fill="#fff" />
      </Pin>
      <Pin x={691} y={1035} color="#6f8a9b"><circle cx="17" cy="16" r="6" fill="#fff" /></Pin>
      <Pin x={1072} y={1031} color="#6f8a9b"><circle cx="17" cy="16" r="6" fill="#fff" /></Pin>

      {/* red marker */}
      <g transform="translate(1033 795)">
        <path d="M21.5 0C9.6 0 0 9.6 0 21.5 0 37 16 41 21.5 62 27 41 43 37 43 21.5 43 9.6 33.4 0 21.5 0z" fill="#ea4335" stroke="#c5221f" strokeWidth="0.8" />
        <circle cx="21.5" cy="22" r="8" fill="#b31412" />
      </g>

      <text x="1017" y="979" fontSize="25" fontFamily="'Open Sans', sans-serif" fontWeight="500" stroke="#fff" strokeWidth="2" paintOrder="stroke" letterSpacing="-1">
        <tspan fill="#4285f4">G</tspan>
        <tspan fill="#ea4335">o</tspan>
        <tspan fill="#fbbc05">o</tspan>
        <tspan fill="#4285f4">g</tspan>
        <tspan fill="#34a853">l</tspan>
        <tspan fill="#ea4335">e</tspan>
      </text>
    </svg>
  );
}

export default function App() {
  return (
    <div className="min-h-[1056px] bg-white pt-[46px]">
      {/* Contact card */}
      <div className="ml-[195px] h-[570px] w-[1722px] rounded-[10px] bg-[#faebd7] text-center font-['Lato',sans-serif] text-[#44561f]">
        <h1 className="pt-[17px] text-[64px] font-light leading-[77px] tracking-[-1.8px] text-[#4a5d23] [-webkit-text-stroke:1px_#4a5d23]">
          Get in Touch!
        </h1>
        <p className="mt-[47px] text-[40px] font-light leading-[52px]">
          Sugden Sports Centre
          <br />
          114 Grosvenor St
          <br />
          Manchester
          <br />
          M1 7HL
          <br />
          United Kingdom
        </p>
        <p className="mt-[49px] text-[40px] font-light leading-[52px]">
          <span className="tracking-[-0.3px]">Phone Number: +44 161 234 5678</span>
          <br />
          <span className="tracking-[0.2px]">Email: info@shuttlestrikersbc.co.uk</span>
        </p>
      </div>

      {/* Map embed */}
      <div className="relative mt-[68px] h-[336px] w-full overflow-hidden border-t-[3px] border-b-[3px] border-l-[3px] border-t-[#9a9a9a] border-b-[#eeeeee] border-l-[#9a9a9a]">
        <MapDrawing />
        <button className="absolute left-[18px] top-[19px] h-[44px] w-[197px] rounded-[3px] bg-white font-['Roboto',sans-serif] text-[20.3px] text-[#1a73e8] shadow-[0_1px_4px_rgba(0,0,0,0.3)]">
          View larger map
        </button>
        <div className="absolute bottom-0 right-0 flex h-[25px] font-['Roboto',sans-serif] text-[17px] leading-[25px] text-black">
          <span className="w-[165px] bg-white/70 text-center">Keyboard shortcuts</span>
          <span className="w-[205px] border-l border-white bg-white/70 text-center">Map data ©2023 Google</span>
          <span className="w-[65px] border-l border-white bg-white/70 text-center">Terms</span>
        </div>
      </div>
    </div>
  );
}
